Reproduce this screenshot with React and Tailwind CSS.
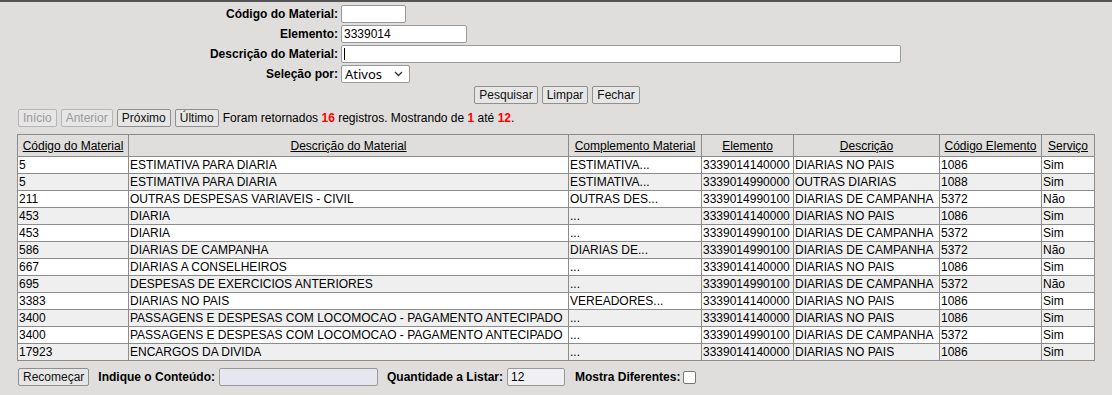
import React from 'react';

const rows = [
  ['5', 'ESTIMATIVA PARA DIARIA', 'ESTIMATIVA...', '3339014140000', 'DIARIAS NO PAIS', '1086', 'Sim'],
  ['5', 'ESTIMATIVA PARA DIARIA', 'ESTIMATIVA...', '3339014990000', 'OUTRAS DIARIAS', '1088', 'Sim'],
  ['211', 'OUTRAS DESPESAS VARIAVEIS - CIVIL', 'OUTRAS DES...', '3339014990100', 'DIARIAS DE CAMPANHA', '5372', 'Não'],
  ['453', 'DIARIA', '...', '3339014140000', 'DIARIAS NO PAIS', '1086', 'Sim'],
  ['453', 'DIARIA', '...', '3339014990100', 'DIARIAS DE CAMPANHA', '5372', 'Sim'],
  ['586', 'DIARIAS DE CAMPANHA', 'DIARIAS DE...', '3339014990100', 'DIARIAS DE CAMPANHA', '5372', 'Não'],
  ['667', 'DIARIAS A CONSELHEIROS', '...', '3339014140000', 'DIARIAS NO PAIS', '1086', 'Sim'],
  ['695', 'DESPESAS DE EXERCICIOS ANTERIORES', '...', '3339014990100', 'DIARIAS DE CAMPANHA', '5372', 'Não'],
  ['3383', 'DIARIAS NO PAIS', 'VEREADORES...', '3339014140000', 'DIARIAS NO PAIS', '1086', 'Sim'],
  ['3400', 'PASSAGENS E DESPESAS COM LOCOMOCAO - PAGAMENTO ANTECIPADO', '...', '3339014140000', 'DIARIAS NO PAIS', '1086', 'Sim'],
  ['3400', 'PASSAGENS E DESPESAS COM LOCOMOCAO - PAGAMENTO ANTECIPADO', '...', '3339014990100', 'DIARIAS DE CAMPANHA', '5372', 'Sim'],
  ['17923', 'ENCARGOS DA DIVIDA', '...', '3339014140000', 'DIARIAS NO PAIS', '1086', 'Sim'],
];

const headers = [
  ['Código do Material', 'w-[111px]'],
  ['Descrição do Material', 'w-[440px]'],
  ['Complemento Material', 'w-[133px]'],
  ['Elemento', 'w-[92px]'],
  ['Descrição', 'w-[146px]'],
  ['Código Elemento', 'w-[102px]'],
  ['Serviço', 'w-[53px]'],
];

function Btn({ children, disabled }) {
  return (
    <button
      className={
        'h-[18px] px-[4px] text-[12px] leading-[16px] rounded-[2px] border bg-[#e6e6e6] ' +
        (disabled ? 'border-[#b5b5b5] text-[#9a9a9a]' : 'border-[#8f8f8f] text-[#111]')
      }
    >
      {children}
    </button>
  );
}

function Label({ children }) {
  return <span className="font-bold text-[12px] text-right pr-[3px] leading-[18px]">{children}</span>;
}

export default function App() {
  return (
    <div
      className="min-h-screen bg-[#dfdedc] border-t-[2px] border-[#555] text-black text-[12px]"
      style={{ fontFamily: '"Liberation Sans", Arial, sans-serif' }}
    >
      <div className="grid grid-cols-[341px_auto] gap-y-[2px] pt-[3px] items-center justify-start">
        <Label>Código do Material:</Label>
        <input className="w-[65px] h-[18px] bg-white border border-[#999] rounded-[2px] text-[12px] px-[2px]" />
        <Label>Elemento:</Label>
        <input
          defaultValue="3339014"
          className="w-[126px] h-[18px] bg-white border border-[#999] rounded-[2px] text-[12px] px-[2px] outline-none"
        />
        <Label>Descrição do Material:</Label>
        <div className="relative w-[560px] h-[18px] bg-white border border-[#999] rounded-[2px]">
          <div className="absolute left-[2px] top-[2px] w-px h-[12px] bg-black" />
        </div>
        <Label>Seleção por:</Label>
        <div
          className="w-[69px] h-[18px] bg-white border border-[#999] rounded-[2px] flex items-center justify-between pl-[3px] pr-[6px] text-[13px]"
          style={{ fontFamily: '"Noto Sans", "DejaVu Sans", sans-serif' }}
        >
          <span className="leading-[16px]">Ativos</span>
          <svg width="9" height="6" viewBox="0 0 9 6">
            <path d="M1 1l3.5 3.5L8 1" fill="none" stroke="#333" strokeWidth="1.3" />
          </svg>
        </div>
      </div>

      <div className="flex justify-center gap-[4px] mt-[3px] pl-[2px]">
        <Btn>Pesquisar</Btn>
        <Btn>Limpar</Btn>
        <Btn>Fechar</Btn>
      </div>

      <div className="flex items-center gap-[4px] pl-[18px] mt-[5px]">
        <Btn disabled>Início</Btn>
        <Btn disabled>Anterior</Btn>
        <Btn>Próximo</Btn>
        <Btn>Último</Btn>
        <span className="leading-[18px]">
          Foram retornados <b className="text-[#f00]">16</b> registros. Mostrando de{' '}
          <b className="text-[#f00]">1</b> até <b className="text-[#f00]">12</b>.
        </span>
      </div>

      <table className="ml-[17px] mt-[7px] w-[1077px] table-fixed border-collapse border border-[#8c8c8c]">
        <thead>
          <tr>
            {headers.map(([h, w]) => (
              <th key={h} className={w + ' border border-[#8c8c8c] font-normal underline pt-[3px] pb-[1px] leading-[17px]'}>
                {h}
              </th>
            ))}
          </tr>
        </thead>
        <tbody>
          {rows.map((r, i) => (
            <tr key={i} className={i % 2 === 0 ? 'bg-white' : 'bg-[#efefef]'}>
              {r.map((c, j) => (
                <td key={j} className="border border-[#8c8c8c] px-px leading-[16px] whitespace-nowrap overflow-hidden">
                  {c}
                </td>
              ))}
            </tr>
          ))}
        </tbody>
      </table>

      <div className="flex items-center pl-[18px] mt-[7px]">
        <Btn>Recomeçar</Btn>
        <span className="font-bold ml-[9px] mr-[4px]">Indique o Conteúdo:</span>
        <div className="w-[159px] h-[18px] bg-[#e6e6f0] border border-[#999] rounded-[2px]" />
        <span className="font-bold ml-[9px] mr-[4px]">Quantidade a Listar:</span>
        <div className="w-[58px] h-[18px] bg-[#f0f0f4] border border-[#999] rounded-[2px] px-[3px] leading-[16px]">12</div>
        <span className="font-bold ml-[10px] mr-[3px]">Mostra Diferentes:</span>
        <div className="w-[13px] h-[13px] bg-white border border-[#777] rounded-[2px]" />
      </div>
    </div>
  );
}
